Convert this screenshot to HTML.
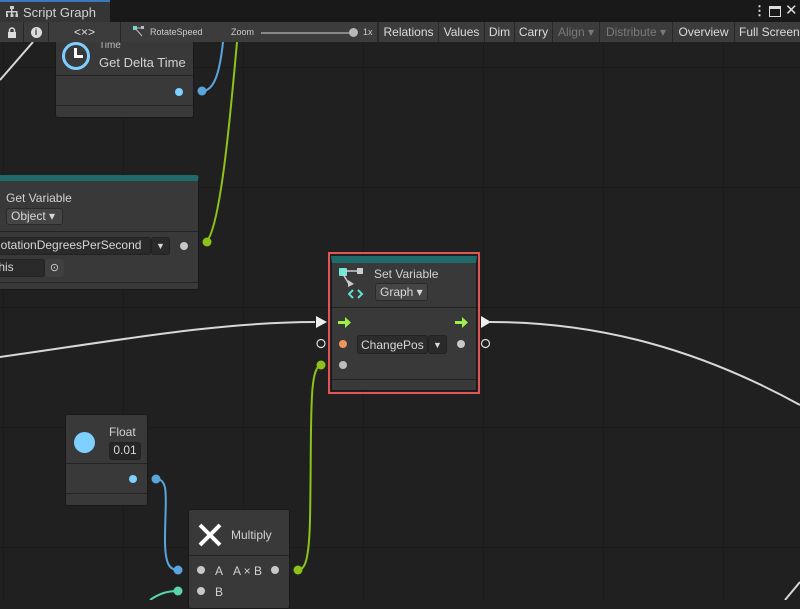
<!DOCTYPE html>
<html><head><meta charset="utf-8"><style>
*{box-sizing:border-box;margin:0;padding:0}
body{width:800px;height:600px;overflow:hidden;background:#202020;font-family:"Liberation Sans",sans-serif;color:#d2d2d2;position:relative;font-size:12px}
.grid{position:absolute;left:0;top:42px;width:800px;height:558px;background-image:linear-gradient(to right,#1b1b1b 1px,transparent 1px),linear-gradient(to bottom,#1b1b1b 1px,transparent 1px);background-size:120px 120px;background-position:3px 25px}
.abs{position:absolute}
.node{position:absolute;background:#393939;border:1px solid #191919;border-radius:3px}
.sep{position:absolute;left:0;right:0;height:1px;background:#232323}
.dot{position:absolute;width:8px;height:8px;border-radius:50%}
.dd{position:absolute;background:#454545;border:1px solid #2a2a2a;border-radius:3px;color:#d8d8d8;font-size:12px;line-height:14px;padding-left:4px}
.fld{position:absolute;background:#2a2a2a;border:1px solid #222;border-radius:3px;color:#d8d8d8;font-size:12px;line-height:15px}
.tb{position:absolute;top:22px;height:20px;background:#3c3c3c;border-right:1px solid #282828;font-size:12px;line-height:20px;color:#dcdcdc;text-align:center}
#top{position:absolute;left:0;top:0;width:800px;height:42px;z-index:10}
</style></head><body>
<div class="grid"></div>

<svg class="abs" style="left:0;top:0" width="800" height="600">
<g fill="none" stroke-width="2">
<path d="M0 80 L33 42" stroke="#d8d8d8"/>
<path d="M0 357 C120 340 220 322 315 322" stroke="#d8d8d8"/>
<path d="M490 322 C600 322 700 350 800 405" stroke="#d8d8d8"/>
<path d="M785 600 L800 582" stroke="#d8d8d8"/>
<path d="M206 242 C220 230 230 120 237 42" stroke="#8cc21a"/>
<path d="M203 91 C215 90 220 70 223 42" stroke="#5aa5dc"/>
<path d="M322 365 C308 365 312 420 310 520 C309 560 305 570 298 570" stroke="#8cc21a"/>
<path d="M156 479 C170 479 165 500 165 540 C165 565 170 570 178 570" stroke="#5aa5dc"/>
<path d="M150 600 C160 593 168 591 178 591" stroke="#5ad4a8"/>
</g>
<circle cx="202" cy="91" r="4.5" fill="#5aa5dc"/>
<circle cx="207" cy="242" r="4.5" fill="#8cc21a"/>
<circle cx="321" cy="365" r="4.5" fill="#8cc21a"/>
<circle cx="156" cy="479" r="4.5" fill="#5aa5dc"/>
<circle cx="178" cy="570" r="4.5" fill="#5aa5dc"/>
<circle cx="178" cy="591" r="4.5" fill="#5ad4a8"/>
<circle cx="298" cy="570" r="4.5" fill="#8cc21a"/>
</svg>

<div class="node" style="left:55px;top:30px;width:139px;height:88px">
<div class="sep" style="top:44px"></div><div class="sep" style="top:74px"></div>
<div class="abs" style="left:6px;top:11px;width:28px;height:28px;border:3.5px solid #7ecfff;border-radius:50%"></div>
<div class="abs" style="left:18px;top:17px;width:2.5px;height:9px;background:#fff"></div>
<div class="abs" style="left:18px;top:24px;width:9px;height:2.5px;background:#fff"></div>
<div class="abs" style="left:43px;top:9px;font-size:10px;color:#bbb">Time</div>
<div class="abs" style="left:43px;top:24px;font-size:13px">Get Delta Time</div>
<div class="dot" style="left:119px;top:57px;background:#7ed0ff"></div>
</div>

<div id="top">
<div class="abs" style="left:0;top:0;width:800px;height:22px;background:#191919"></div>
<div class="abs" style="left:0;top:0;width:110px;height:22px;background:#353535;border-top:2px solid #3a79bb"></div>
<svg class="abs" style="left:6px;top:6px" width="12" height="12"><rect x="4" y="0" width="4" height="3" fill="#ccc"/><rect x="5" y="3" width="1.5" height="3" fill="#ccc"/><rect x="0" y="5" width="11" height="1.5" fill="#ccc"/><rect x="0" y="5" width="1.5" height="3" fill="#ccc"/><rect x="5" y="5" width="1.5" height="3" fill="#ccc"/><rect x="10" y="5" width="1.5" height="3" fill="#ccc"/><rect x="0" y="8" width="2" height="3" fill="#ccc"/><rect x="4.5" y="8" width="3" height="3" fill="#ccc"/><rect x="9.5" y="8" width="2.5" height="3" fill="#ccc"/></svg>
<div class="abs" style="left:23px;top:5px;font-size:13px;color:#d2d2d2">Script Graph</div>
<div class="abs" style="left:753px;top:3px;font-size:13px;color:#ddd;font-weight:bold">⋮</div>
<div class="abs" style="left:769px;top:6px;width:12px;height:11px;border:1.5px solid #ddd;border-top-width:3px"></div>
<div class="abs" style="left:785px;top:1px;font-size:15px;color:#ddd">✕</div>
<div class="abs" style="left:0;top:22px;width:800px;height:20px;background:#282828"></div>
<div class="tb" style="left:0;width:24px"><svg style="margin-top:5px" width="10" height="11"><path d="M2.5 5V3.5a2.5 2.5 0 0 1 5 0V5" stroke="#ddd" stroke-width="1.5" fill="none"/><rect x="1" y="5" width="8" height="6" fill="#ddd"/></svg></div>
<div class="tb" style="left:24px;width:25px;"><span style="display:inline-block;width:11px;height:11px;border-radius:50%;background:#ddd;color:#3c3c3c;font-size:9px;line-height:11px;font-weight:bold;margin-top:5px;vertical-align:top">i</span></div>
<div class="tb" style="left:49px;width:72px">&lt;×&gt;</div>
<div class="tb" style="left:121px;width:257px;text-align:left;font-size:9px">
<svg class="abs" style="left:12px;top:4px" width="12" height="12"><rect x="0" y="0" width="4" height="4" fill="#5fe0c8"/><line x1="2" y1="2" x2="10" y2="2" stroke="#bbb"/><line x1="2" y1="2" x2="9" y2="10" stroke="#bbb"/><rect x="8" y="0" width="3" height="3" fill="#bbb"/></svg>
<span class="abs" style="left:29px;color:#ccc">RotateSpeed</span>
<span class="abs" style="left:110px;color:#ccc">Zoom</span>
<div class="abs" style="left:140px;top:10px;width:92px;height:2px;background:#888"></div>
<div class="abs" style="left:228px;top:6px;width:9px;height:9px;border-radius:50%;background:#b8b8b8"></div>
<span class="abs" style="left:242px;color:#ccc">1x</span></div>
<div class="tb" style="left:379px;width:60px">Relations</div>
<div class="tb" style="left:439px;width:46px">Values</div>
<div class="tb" style="left:485px;width:30px">Dim</div>
<div class="tb" style="left:515px;width:38px">Carry</div>
<div class="tb" style="left:553px;width:47px;color:#7a7a7a">Align ▾</div>
<div class="tb" style="left:600px;width:73px;color:#7a7a7a">Distribute ▾</div>
<div class="tb" style="left:673px;width:62px">Overview</div>
<div class="tb" style="left:735px;width:70px;text-align:left;padding-left:4px">Full Screen</div>
</div>

<div class="node" style="left:-10px;top:175px;width:209px;height:115px;border-top:6px solid #1d6b6b">
<div class="abs" style="left:15px;top:10px;font-size:12px">Get Variable</div>
<div class="dd" style="left:15px;top:27px;width:57px;height:17px">Object ▾</div>
<div class="sep" style="top:50px"></div>
<div class="fld" style="left:0;top:56px;width:160px;height:18px;padding-left:0">RotationDegreesPerSecond</div>
<div class="fld" style="left:160px;top:56px;width:19px;height:18px;font-size:9px;text-align:center;line-height:17px">▼</div>
<div class="dot" style="left:189px;top:61px;background:#c8c8c8"></div>
<div class="fld" style="left:0;top:78px;width:54px;height:18px;padding-left:3px">this</div>
<div class="abs" style="left:54px;top:78px;width:19px;height:18px;background:#404040;border-radius:3px;text-align:center;font-size:11px;line-height:18px">⊙</div>
<div class="sep" style="top:101px"></div>
</div>

<div class="abs" style="left:328px;top:252px;width:152px;height:142px;border:2px solid #e05555"></div>
<div class="node" style="left:331px;top:256px;width:146px;height:135px;border-top:7px solid #1d6b6b;border-radius:0">
<svg class="abs" style="left:7px;top:3px" width="28" height="36"><rect x="0" y="2" width="8" height="8" rx="1" fill="#6ee8d8"/><line x1="6" y1="5" x2="20" y2="5" stroke="#ccc" stroke-width="1.5"/><rect x="18" y="2" width="6" height="6" fill="#ccc"/><line x1="4" y1="8" x2="10" y2="18" stroke="#ccc" stroke-width="1.5"/><path d="M9 14 L15 18 L9 21Z" fill="#ccc"/><path d="M14 24 L10 28 L14 32 M19 24 L23 28 L19 32" stroke="#5fe0d0" stroke-width="2" fill="none"/></svg>
<div class="abs" style="left:42px;top:4px;font-size:12px">Set Variable</div>
<div class="dd" style="left:43px;top:20px;width:53px;height:18px;line-height:16px">Graph ▾</div>
<div class="sep" style="top:44px"></div>
<div class="abs" style="left:6px;top:54px;width:14px;height:11px"><svg width="14" height="11"><path d="M0 4H7V0L13 5.5L7 11V7H0Z" fill="#9bf04a"/></svg></div>
<div class="abs" style="left:123px;top:54px;width:14px;height:11px"><svg width="14" height="11"><path d="M0 4H7V0L13 5.5L7 11V7H0Z" fill="#9bf04a"/></svg></div>
<div class="dot" style="left:7px;top:77px;background:#f0965a"></div>
<div class="fld" style="left:25px;top:72px;width:71px;height:19px;padding-left:3px;font-size:12px;line-height:18px;background:#2c2c2c">ChangePos</div>
<div class="fld" style="left:96px;top:72px;width:19px;height:19px;font-size:9px;text-align:center;line-height:18px">▼</div>
<div class="dot" style="left:125px;top:77px;background:#c8c8c8"></div>
<div class="dot" style="left:7px;top:98px;background:#bdbdbd"></div>
<div class="sep" style="top:116px"></div>
</div>
<svg class="abs" style="left:310px;top:314px" width="190" height="40"><path d="M6 2 L17 8 L6 14Z" fill="#eee"/><path d="M171 2 L181 8 L171 14Z" fill="#eee"/><circle cx="11" cy="29.5" r="4" fill="none" stroke="#ddd" stroke-width="1.2"/><circle cx="175.5" cy="29.5" r="4" fill="none" stroke="#ddd" stroke-width="1.2"/></svg>

<div class="node" style="left:65px;top:414px;width:83px;height:92px">
<div class="abs" style="left:8px;top:17px;width:21px;height:21px;border-radius:50%;background:#7ed0ff"></div>
<div class="abs" style="left:43px;top:10px;font-size:12px">Float</div>
<div class="fld" style="left:43px;top:27px;width:32px;height:18px;text-align:center;background:#262626">0.01</div>
<div class="sep" style="top:48px"></div><div class="sep" style="top:78px"></div>
<div class="dot" style="left:63px;top:60px;background:#7ed0ff"></div>
</div>

<div class="node" style="left:188px;top:509px;width:102px;height:100px">
<svg class="abs" style="left:8px;top:12px" width="26" height="26"><path d="M3 3L23 23M23 3L3 23" stroke="#fff" stroke-width="4"/></svg>
<div class="abs" style="left:42px;top:18px;font-size:12px">Multiply</div>
<div class="sep" style="top:45px"></div>
<div class="dot" style="left:8px;top:56px;background:#c8c8c8"></div>
<div class="abs" style="left:26px;top:54px;font-size:12px">A</div>
<div class="abs" style="left:44px;top:54px;font-size:12px">A × B</div>
<div class="dot" style="left:82px;top:56px;background:#c8c8c8"></div>
<div class="dot" style="left:8px;top:77px;background:#c8c8c8"></div>
<div class="abs" style="left:26px;top:75px;font-size:12px">B</div>
</div>
</body></html>
